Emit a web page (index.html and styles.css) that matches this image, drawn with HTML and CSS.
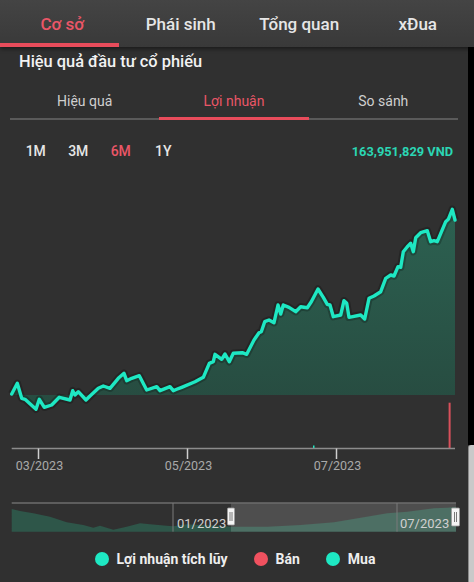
FILE: index.html
```html
<!DOCTYPE html>
<html lang="vi">
<head>
    <meta charset="UTF-8">
    <meta name="viewport" content="width=device-width, initial-scale=1.0">
    <title>Hiệu quả đầu tư cổ phiếu</title>
    <link rel="stylesheet" href="styles.css">
</head>
<body>

    <div class="topbar">
        <div class="tab active">Cơ sở</div>
        <div class="tab">Phái sinh</div>
        <div class="tab">Tổng quan</div>
        <div class="tab">xĐua</div>
    </div>

    <div class="page">
        <div class="content">
            <div class="title">Hiệu quả đầu tư cổ phiếu</div>

            <div class="subtabs">
                <div class="subtab">Hiệu quả</div>
                <div class="subtab active">Lợi nhuận</div>
                <div class="subtab">So sánh</div>
            </div>

            <div class="periods">
                <div class="period">1M</div>
                <div class="period">3M</div>
                <div class="period active">6M</div>
                <div class="period">1Y</div>
                <div class="value">163,951,829 VND</div>
            </div>

            <!-- biểu đồ lợi nhuận tích lũy -->
            <svg class="chart" width="468" height="300" viewBox="0 0 468 300">
                <defs>
                    <linearGradient id="areaFill" x1="0" y1="0" x2="0" y2="1">
                        <stop offset="0" stop-color="#2c6151"/>
                        <stop offset="1" stop-color="#274b40"/>
                    </linearGradient>
                </defs>
                <path class="area" d="M11.7 218 L17.3 207.3 L21.7 222.3 L25 223.3 L36 233.3 L39.3 223.3 L44.3 231.3 L51.7 229 L59.3 221.3 L70 224 L72.7 214.7 L75 219 L78.3 215.7 L86 224 L90 220 L98.3 212.3 L103.3 210 L110 212.3 L118.3 202.3 L124 197.3 L126.7 204.7 L131.7 202.3 L139.3 199.7 L146.7 214 L156.7 210.7 L160 214.7 L170 210.7 L173.3 214.7 L176.7 213.3 L181.7 211.3 L195 205.7 L203.3 201.3 L209.3 187.3 L213.3 185.7 L215 178.3 L221.7 183.3 L225 178 L229.3 185.7 L233.3 177.3 L242.3 176.7 L246.7 178.3 L254 164 L259 156.7 L261.3 155.7 L264.7 145.7 L269 144 L274 146.7 L278 129 L280.7 138 L283.3 129 L289 131.3 L295.7 135.7 L300.7 130.7 L307.3 131.7 L311.3 125.7 L318 113 L323.3 121.3 L327.3 128.3 L330 129 L333.3 140.7 L340.7 139 L344 124.7 L346.7 127.3 L349 141.3 L360.7 139 L364.7 143 L369 122.3 L374 120 L380.7 115.7 L385.7 102.3 L390.7 99 L394 100 L398 90.7 L400.7 91.3 L403.3 75.7 L407.3 70.7 L410.7 67.3 L413.3 75.7 L415.7 61.7 L420.7 56.7 L427.3 54.7 L430.7 65.7 L434 64.7 L437.3 65.7 L445.7 45.7 L448.3 43.3 L452.3 33.3 L455 44 L455 219 L11.7 219 Z"/>
                <path class="line-shadow" d="M11.7 218 L17.3 207.3 L21.7 222.3 L25 223.3 L36 233.3 L39.3 223.3 L44.3 231.3 L51.7 229 L59.3 221.3 L70 224 L72.7 214.7 L75 219 L78.3 215.7 L86 224 L90 220 L98.3 212.3 L103.3 210 L110 212.3 L118.3 202.3 L124 197.3 L126.7 204.7 L131.7 202.3 L139.3 199.7 L146.7 214 L156.7 210.7 L160 214.7 L170 210.7 L173.3 214.7 L176.7 213.3 L181.7 211.3 L195 205.7 L203.3 201.3 L209.3 187.3 L213.3 185.7 L215 178.3 L221.7 183.3 L225 178 L229.3 185.7 L233.3 177.3 L242.3 176.7 L246.7 178.3 L254 164 L259 156.7 L261.3 155.7 L264.7 145.7 L269 144 L274 146.7 L278 129 L280.7 138 L283.3 129 L289 131.3 L295.7 135.7 L300.7 130.7 L307.3 131.7 L311.3 125.7 L318 113 L323.3 121.3 L327.3 128.3 L330 129 L333.3 140.7 L340.7 139 L344 124.7 L346.7 127.3 L349 141.3 L360.7 139 L364.7 143 L369 122.3 L374 120 L380.7 115.7 L385.7 102.3 L390.7 99 L394 100 L398 90.7 L400.7 91.3 L403.3 75.7 L407.3 70.7 L410.7 67.3 L413.3 75.7 L415.7 61.7 L420.7 56.7 L427.3 54.7 L430.7 65.7 L434 64.7 L437.3 65.7 L445.7 45.7 L448.3 43.3 L452.3 33.3 L455 44"/>
                <path class="line" d="M11.7 218 L17.3 207.3 L21.7 222.3 L25 223.3 L36 233.3 L39.3 223.3 L44.3 231.3 L51.7 229 L59.3 221.3 L70 224 L72.7 214.7 L75 219 L78.3 215.7 L86 224 L90 220 L98.3 212.3 L103.3 210 L110 212.3 L118.3 202.3 L124 197.3 L126.7 204.7 L131.7 202.3 L139.3 199.7 L146.7 214 L156.7 210.7 L160 214.7 L170 210.7 L173.3 214.7 L176.7 213.3 L181.7 211.3 L195 205.7 L203.3 201.3 L209.3 187.3 L213.3 185.7 L215 178.3 L221.7 183.3 L225 178 L229.3 185.7 L233.3 177.3 L242.3 176.7 L246.7 178.3 L254 164 L259 156.7 L261.3 155.7 L264.7 145.7 L269 144 L274 146.7 L278 129 L280.7 138 L283.3 129 L289 131.3 L295.7 135.7 L300.7 130.7 L307.3 131.7 L311.3 125.7 L318 113 L323.3 121.3 L327.3 128.3 L330 129 L333.3 140.7 L340.7 139 L344 124.7 L346.7 127.3 L349 141.3 L360.7 139 L364.7 143 L369 122.3 L374 120 L380.7 115.7 L385.7 102.3 L390.7 99 L394 100 L398 90.7 L400.7 91.3 L403.3 75.7 L407.3 70.7 L410.7 67.3 L413.3 75.7 L415.7 61.7 L420.7 56.7 L427.3 54.7 L430.7 65.7 L434 64.7 L437.3 65.7 L445.7 45.7 L448.3 43.3 L452.3 33.3 L455 44"/>

                <!-- khối lượng mua / bán -->
                <rect class="sell-bar" x="448.6" y="226.7" width="2" height="45.8"/>
                <rect class="buy-bar" x="313" y="269.5" width="1.5" height="3"/>

                <line class="axis" x1="11.7" y1="272.5" x2="455" y2="272.5"/>
                <line class="tick" x1="38.5" y1="272.5" x2="38.5" y2="283"/>
                <line class="tick" x1="187.5" y1="272.5" x2="187.5" y2="283"/>
                <line class="tick" x1="336.5" y1="272.5" x2="336.5" y2="283"/>
                <text class="axis-label" x="39.5" y="294">03/2023</text>
                <text class="axis-label" x="188.5" y="294">05/2023</text>
                <text class="axis-label" x="337.5" y="294">07/2023</text>
            </svg>

            <!-- thanh điều hướng -->
            <svg class="navigator" width="468" height="40" viewBox="0 0 468 40">
                <path class="nav-area" d="M11.7 13 L20 15 L33.3 17.3 L50 20.7 L66.7 26.3 L83.3 29 L93.3 31.7 L100 29.7 L113.3 33.7 L126.7 30.7 L140 27.3 L150 28.3 L166.7 29.7 L173.3 30.3 L186.7 28.3 L200 29 L215 29.5 L232 30.7 L267.3 30.7 L300.7 29 L334 26.3 L360.7 21.7 L387.3 17.3 L407.3 15.7 L434 12.3 L447.3 11.7 L456 11 L456 35.7 L11.7 35.7 Z"/>
                <rect class="nav-selected" x="231" y="7" width="225" height="28.7"/>
                <line class="nav-top" x1="11.7" y1="7" x2="456" y2="7"/>
                <line class="nav-grid" x1="173" y1="7" x2="173" y2="35.7"/>
                <line class="nav-grid" x1="397" y1="7" x2="397" y2="35.7"/>
                <text class="nav-label" x="177" y="32">01/2023</text>
                <text class="nav-label" x="400" y="32">07/2023</text>
                <rect class="handle" x="227.5" y="12" width="7" height="17" rx="1"/>
                <line class="handle-grip" x1="230" y1="16" x2="230" y2="25"/>
                <line class="handle-grip" x1="232" y1="16" x2="232" y2="25"/>
                <rect class="handle" x="451.5" y="12" width="8" height="18" rx="1"/>
                <line class="handle-grip" x1="454.5" y1="16" x2="454.5" y2="26"/>
                <line class="handle-grip" x1="456.5" y1="16" x2="456.5" y2="26"/>
            </svg>

            <div class="legend">
                <div class="legend-item"><span class="dot teal"></span>Lợi nhuận tích lũy</div>
                <div class="legend-item"><span class="dot red"></span>Bán</div>
                <div class="legend-item"><span class="dot teal"></span>Mua</div>
            </div>
        </div>

        <div class="gutter">
            <div class="gutter-top"></div>
            <div class="gutter-thumb"></div>
        </div>
    </div>

</body>
</html>
```

FILE: styles.css
```css
body {
    margin: 0;
    width: 474px;
    height: 582px;
    overflow: hidden;
    font-family: Roboto, "Noto Sans", sans-serif;
    background-color: #303030;
    color: #e8e8e8;
}

.topbar {
    display: flex;
    height: 47px;
    background: linear-gradient(#444444, #393939);
    box-shadow: 0 2px 4px rgba(0, 0, 0, 0.45);
    position: relative;
    z-index: 1;
}

.tab {
    flex: 1;
    box-sizing: border-box;
    padding: 14px 0 0 6px;
    line-height: 20px;
    text-align: center;
    font-size: 17px;
    font-weight: 500;
    color: #e6e6e6;
    border-bottom: 4px solid transparent;
}

.tab.active {
    color: #ea5667;
    border-bottom-color: #e84c5b;
}

.page {
    display: flex;
    height: 535px;
}

.content {
    width: 468px;
}

.gutter {
    width: 6px;
    display: flex;
    flex-direction: column;
}

.gutter-top {
    height: 398px;
    background-color: #000;
}

.gutter-thumb {
    flex: 1;
    background-color: #c9c9c9;
    border-left: 1px solid #8a8a8a;
    border-radius: 3px 0 0 0;
}

.title {
    padding-left: 19px;
    height: 29px;
    line-height: 29px;
    font-size: 16.4px;
    font-weight: 500;
    color: #f2f2f2;
}

.subtabs {
    display: flex;
    margin: 0 10px;
    height: 44px;
    box-sizing: border-box;
    border-bottom: 2px solid #5a5a5a;
}

.subtab {
    flex: 1;
    position: relative;
    padding-top: 15px;
    line-height: 20px;
    text-align: center;
    font-size: 14px;
    color: #cfcfcf;
}

.subtab.active {
    color: #ea5667;
}

.subtab.active::after {
    content: "";
    position: absolute;
    left: 0;
    right: 0;
    bottom: -2px;
    height: 3px;
    background-color: #e84c5b;
}

.periods {
    display: flex;
    align-items: baseline;
    height: 56px;
    box-sizing: border-box;
    padding: 21px 15px 0 14.5px;
}

.period {
    width: 42.5px;
    text-align: center;
    font-size: 14px;
    font-weight: 500;
    line-height: 20px;
    color: #e6e6e6;
}

.period.active {
    color: #ea5667;
}

.value {
    margin-left: auto;
    font-size: 12.8px;
    font-weight: 700;
    color: #2bd6b4;
}

.chart,
.navigator {
    display: block;
}

.area {
    fill: url(#areaFill);
}

.line-shadow {
    fill: none;
    stroke: rgba(0, 0, 0, 0.22);
    stroke-width: 7.5;
    stroke-linejoin: round;
}

.line {
    fill: none;
    stroke: #1ee8c3;
    stroke-width: 3.4;
    stroke-linejoin: round;
    stroke-linecap: round;
}

.sell-bar {
    fill: #d9505b;
}

.buy-bar {
    fill: #1ee8c3;
}

.axis {
    stroke: #8c8c8c;
    stroke-width: 1.5;
}

.tick {
    stroke: #cfcfcf;
    stroke-width: 1.5;
}

.axis-label {
    font-size: 12.5px;
    fill: #a9a9a9;
    text-anchor: middle;
}

.navigator {
    margin-top: 20px;
}

.nav-area {
    fill: #2e5649;
}

.nav-selected {
    fill: rgba(255, 255, 255, 0.15);
}

.nav-top {
    stroke: #6c6c6c;
    stroke-width: 1.5;
}

.nav-grid {
    stroke: #7a7a7a;
    stroke-width: 1;
}

.nav-label {
    font-size: 13px;
    fill: #d0d0d0;
}

.handle {
    fill: #f4f4f4;
    stroke: #9a9a9a;
    stroke-width: 0.8;
}

.handle-grip {
    stroke: #777;
    stroke-width: 1;
}

.legend {
    display: flex;
    justify-content: center;
    align-items: center;
    gap: 26px;
    height: 46px;
    padding-left: 2px;
    font-size: 14px;
    font-weight: 700;
    color: #eeeeee;
}

.legend-item {
    display: flex;
    align-items: center;
}

.dot {
    width: 14px;
    height: 14px;
    border-radius: 50%;
    margin-right: 8px;
}

.dot.teal {
    background-color: #1ee8c3;
}

.dot.red {
    background-color: #f0515f;
}
```
